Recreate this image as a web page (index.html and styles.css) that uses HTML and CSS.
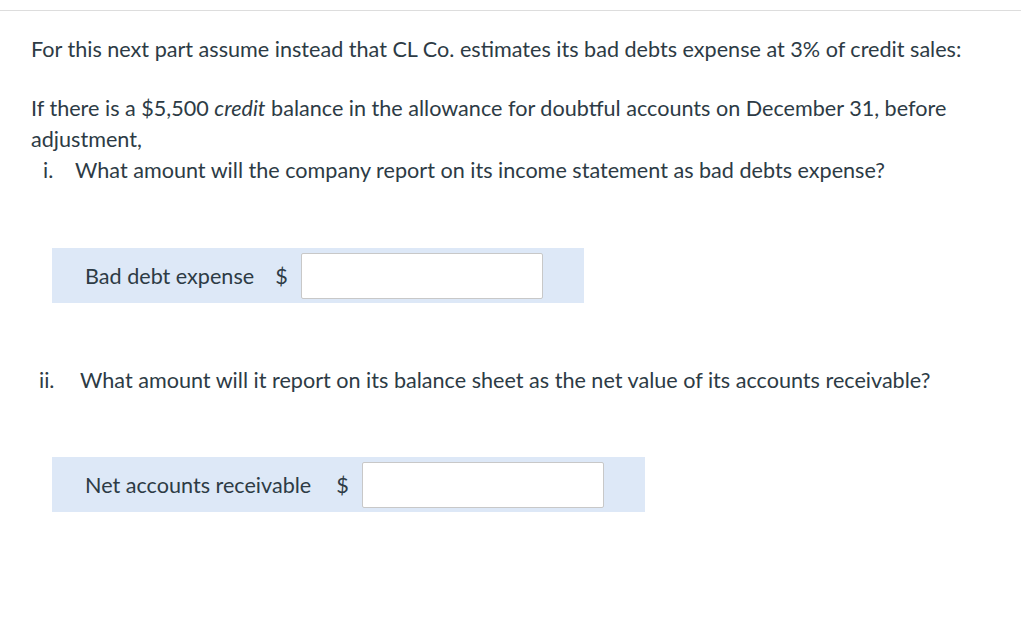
FILE: index.html
```html
<!DOCTYPE html>
<html>
<head>
<meta charset="utf-8">
<link rel="stylesheet" href="styles.css">
</head>
<body>
<div class="page">
  <p class="intro">For this next part assume instead that CL Co. estimates its bad debts expense at 3% of credit sales:</p>
  <p class="para">If there is a $5,500 <em>credit</em> balance in the allowance for doubtful accounts on December 31, before adjustment,</p>
  <div class="item item-i"><span class="marker">i.</span><span>What amount will the company report on its income statement as bad debts expense?</span></div>
  <div class="answer answer-1">
    <span class="label">Bad debt expense</span>
    <span class="dollar">$</span>
    <input class="field" type="text">
  </div>
  <div class="item item-ii"><span class="marker">ii.</span><span>What amount will it report on its balance sheet as the net value of its accounts receivable?</span></div>
  <div class="answer answer-2">
    <span class="label">Net accounts receivable</span>
    <span class="dollar">$</span>
    <input class="field" type="text">
  </div>
</div>
</body>
</html>
```

FILE: styles.css
```css
html, body {
  margin: 0;
  padding: 0;
  background: #ffffff;
}
body {
  font-family: Lato, "Liberation Sans", sans-serif;
  font-size: 21.6px;
  color: #2d3b45;
}
.page {
  margin-top: 10px;
  border-top: 1px solid #dddddd;
  padding: 23px 20px 0 31px;
}
p {
  margin: 0;
  line-height: 31px;
}
.intro {
  margin-bottom: 28px;
}
.item {
  display: flex;
  line-height: 31px;
}
.item-i {
  padding-left: 12px;
}
.item-i .marker {
  width: 32px;
  flex: none;
}
.item-ii {
  margin-top: 62px;
  padding-left: 8px;
}
.item-ii .marker {
  width: 41px;
  flex: none;
}
em {
  font-style: italic;
}
.answer {
  display: flex;
  align-items: center;
  margin-left: 21px;
  background: #dde8f7;
  height: 55px;
  padding: 0 41px 0 33px;
  width: fit-content;
}
.answer-1 {
  margin-top: 62px;
}
.answer-2 {
  margin-top: 61px;
}
.label {
  margin-right: 22px;
}
.answer-1 .label {
  margin-right: 21px;
}
.answer-2 .label {
  margin-right: 25px;
}
.dollar {
  margin-right: 13px;
}
.field {
  box-sizing: border-box;
  width: 242px;
  height: 46px;
  border: 1px solid #c8c8c8;
  border-radius: 2px;
  background: #fff;
  margin: 0;
  padding: 0 8px;
  font: inherit;
}
```
